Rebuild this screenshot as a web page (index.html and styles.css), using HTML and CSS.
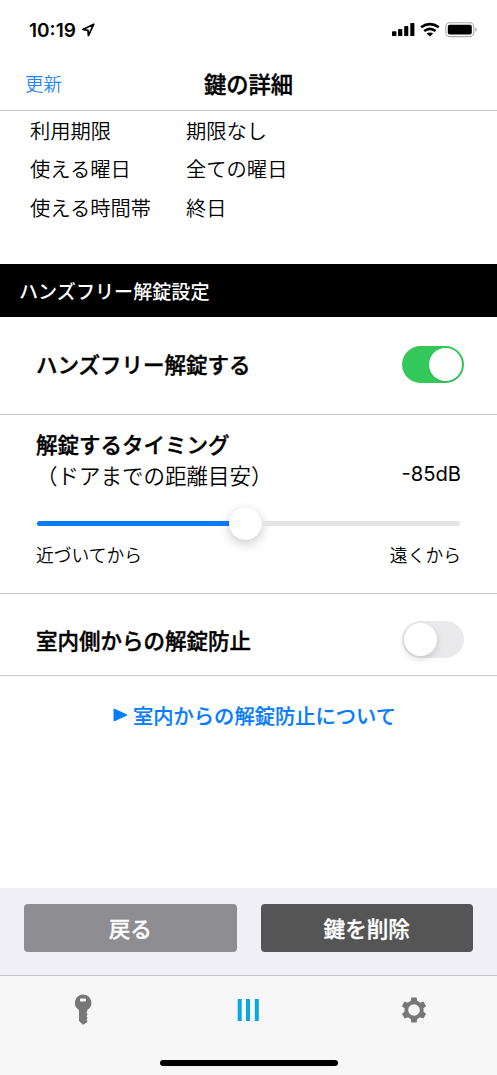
FILE: index.html
```html
<!DOCTYPE html>
<html lang="ja">
<head>
<meta charset="utf-8">
<title>鍵の詳細</title>
<link rel="stylesheet" href="styles.css">
</head>
<body>
<div class="status">
  <div class="clock"><span>10:19</span>
    <svg width="14" height="14" viewBox="0 0 14 14"><path d="M12.8 1.2 1.8 6.4l5.2.9.4 5.3z" fill="none" stroke="#000" stroke-width="1.7" stroke-linejoin="round"/></svg>
  </div>
  <svg class="indicators" width="86" height="16" viewBox="0 0 86 16">
    <path d="M.9 9.2h2.7q.8 0 .8.8v4.1H0V10q0-.8.9-.8zM6.9 7h2.6q.8 0 .8.8v6.3H6.1V7.8q0-.8.8-.8zM13 4.1h2.5q.8 0 .8.8v9.2h-4.1V4.9q0-.8.8-.8zM19.1 1h2.5q.8 0 .8.8v12.3h-4.1V1.8q0-.8.8-.8z"/>
    <g fill="none" stroke="#000" stroke-width="2.6"><path d="M29 5.2q8.9-6.3 17.8 0M32.2 9q5.7-4.4 11.4 0"/></g>
    <path d="M34.6 11.4q3.3-2 6.6 0l-3.3 3.2z"/>
    <rect x="53.8" y=".8" width="28" height="13.8" rx="4" fill="none" stroke="#aaa" stroke-width="1.1"/>
    <rect x="55.8" y="2.8" width="24" height="9.8" rx="2"/>
    <path d="M83.3 5.5q3.3 2.2 0 4.5z" fill="#aaa"/>
  </svg>
</div>
<header class="nav"><a class="refresh">更新</a><h1>鍵の詳細</h1></header>
<main class="content">
  <dl class="info">
    <dt>利用期限</dt><dd>期限なし</dd>
    <dt>使える曜日</dt><dd>全ての曜日</dd>
    <dt>使える時間帯</dt><dd>終日</dd>
  </dl>
  <h2 class="section">ハンズフリー解錠設定</h2>
  <div class="row handsfree"><span>ハンズフリー解錠する</span><div class="switch on"><i></i></div></div>
  <div class="timing">
    <div class="timing-head">
      <div><strong>解錠するタイミング</strong><p>（ドアまでの距離目安）</p></div>
      <span class="level">-85dB</span>
    </div>
    <div class="slider"><div class="filled"></div><div class="thumb"></div><div class="rest"></div></div>
    <div class="range"><span>近づいてから</span><span>遠くから</span></div>
  </div>
  <div class="row indoor"><span>室内側からの解錠防止</span><div class="switch"><i></i></div></div>
  <a class="about"><svg width="15" height="14" viewBox="0 0 15 14"><path d="M1 1v12L14 7z" fill="#087cff" stroke="#087cff" stroke-width="1" stroke-linejoin="round"/></svg><span>室内からの解錠防止について</span></a>
</main>
<div class="actions"><button class="back">戻る</button><button class="delete">鍵を削除</button></div>
<footer class="tabs">
  <div class="icons">
    <svg width="18" height="32" viewBox="0 0 18 32"><path fill="#777" fill-rule="evenodd" d="M9 .5a8.3 8.3 0 0 1 4.3 15.4v1.6l-1 1 1 1v1.7l-1 1 1 1v1.5l-1 1 1 1v1.5L9 30.7l-4-3.6V15.9A8.3 8.3 0 0 1 9 .5zM6.8 4.5q-.8 0-.8.8v1.4q0 .8.8.8h4.4q.8 0 .8-.8V5.3q0-.8-.8-.8z"/></svg>
    <svg width="22" height="22" viewBox="0 0 22 22"><path fill="#0ba7df" d="M.7 0h4v22h-4zM9 0h4v22H9zM17.8 0h4v22h-4z"/></svg>
    <svg width="26" height="26" viewBox="-13 -13 26 26">
      <g fill="#777"><path id="cog" d="M-3.1-9-2.7-12.4h5.4l.4 3.4V9l-.4 3.4h-5.4L-3.1 9z"/><use href="#cog" transform="rotate(60)"/><use href="#cog" transform="rotate(120)"/><circle r="9.7"/></g><circle r="5.8" fill="#f7f7f7"/>
    </svg>
  </div>
  <div class="home"></div>
</footer>
</body>
</html>
```
FILE: styles.css
```css
* { box-sizing: border-box; }
body { margin: 0; width: 497px; height: 1075px; overflow: hidden; display: flex; flex-direction: column; background: #fff; color: #000; font-family: "Noto Sans CJK JP", sans-serif; font-weight: 350; }
svg { display: block; flex: none; }
h1, h2, p, dl, dd { margin: 0; }
.status { height: 58px; padding: 2px 19px 0 29px; display: flex; align-items: center; justify-content: space-between; }
.clock { display: flex; align-items: center; gap: 5px; font: 600 19px Inter, sans-serif; }
.nav { height: 53px; padding: 0 25px 3px; border-bottom: 1px solid #c8c8ca; display: grid; grid-template-columns: 1fr auto 1fr; align-items: center; line-height: 30px; }
.refresh { color: #2384f5; font-size: 18.5px; padding-top: 1px; }
.nav h1 { font-size: 22.3px; font-weight: 500; line-height: 30px; -webkit-text-stroke: .4px; }
.content { flex: 1; display: flex; flex-direction: column; }
.info { height: 153px; padding: 0 30px; display: grid; grid-template-columns: 156px 1fr; grid-auto-rows: 38.3px; align-content: start; align-items: center; font-size: 20.3px; line-height: 30px; }
.section { height: 53px; padding-left: 19px; background: #000; color: #fff; font-size: 19.1px; font-weight: 500; line-height: 54px; }
.row { display: flex; align-items: center; justify-content: space-between; padding: 0 33px 0 36px; border-bottom: 1px solid #c7c7c7; font-size: 21.5px; font-weight: 500; line-height: 30px; }
.row span, .timing-head strong { -webkit-text-stroke: .4px; }
.handsfree { height: 98px; padding-bottom: 2px; }
.handsfree span { margin-top: -2px; }
.indoor { height: 82px; padding-top: 10px; }
.switch { width: 62px; height: 37px; border-radius: 19px; padding: 2px; background: #e9e9eb; display: flex; }
.switch i { width: 33px; height: 33px; border-radius: 50%; background: #fff; box-shadow: 0 3px 7px rgba(0,0,0,.15); }
.switch.on { background: #34c759; justify-content: flex-end; }
.switch.on i { box-shadow: 0 1px 2px rgba(0,0,0,.1); }
.timing { height: 179px; padding: 14px 36px 0; border-bottom: 1px solid #c7c7c7; }
.timing-head { display: flex; align-items: flex-end; justify-content: space-between; font-size: 21.5px; line-height: 30.5px; }
.timing-head strong { display: block; font-weight: 500; }
.level { font-family: Inter, sans-serif; font-size: 20.2px; font-weight: 400; line-height: 32px; }
.slider { height: 34px; margin: 16px 1px 0; display: flex; align-items: center; }
.filled { width: 192px; height: 5px; border-radius: 3px 0 0 3px; background: #087cff; }
.thumb { width: 33px; height: 33px; border-radius: 50%; background: #fff; box-shadow: 0 4px 12px rgba(0,0,0,.2), 0 0 1px rgba(0,0,0,.18); }
.rest { flex: 1; height: 5px; border-radius: 0 3px 3px 0; background: #e4e4e6; }
.range { display: flex; justify-content: space-between; margin-top: -1px; font-size: 17.8px; line-height: 30px; }
.about { display: flex; align-items: center; justify-content: center; gap: 5px; padding: 24px 0 0 12px; color: #087cff; font-size: 20.3px; font-weight: 500; line-height: 30px; -webkit-text-stroke: .2px; }
.actions { height: 87px; background: #f0eff5; padding: 16px 24px 0; display: flex; gap: 24px; }
.actions button { flex: 1; height: 48px; border: 0; border-radius: 4px; padding: 0; color: #fff; font: 500 21.6px/46px "Noto Sans CJK JP", sans-serif; -webkit-text-stroke: .3px; }
.back { background: #8e8d92; }
.delete { background: #555; }
.tabs { height: 100px; background: #f7f7f7; border-top: 1px solid #c3c3c8; display: flex; flex-direction: column; align-items: center; }
.icons { width: 100%; height: 67px; display: grid; grid-template-columns: repeat(3, 1fr); place-items: center; }
.home { width: 178px; height: 6px; border-radius: 3px; background: #000; margin-top: 17px; }
```
